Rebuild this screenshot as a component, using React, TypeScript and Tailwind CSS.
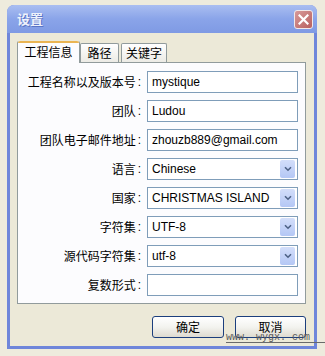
import type { ReactNode } from "react";

const cjk = "font-['Noto_Sans_CJK_SC','Noto_Sans',sans-serif]";
const latin = "font-['Liberation_Sans','Noto_Sans_CJK_SC',sans-serif]";

type Field = { label: string; value: string; select?: boolean };

const fields: Field[] = [
  { label: "工程名称以及版本号", value: "mystique" },
  { label: "团队", value: "Ludou" },
  { label: "团队电子邮件地址", value: "zhouzb889@gmail.com" },
  { label: "语言", value: "Chinese", select: true },
  { label: "国家", value: "CHRISTMAS ISLAND", select: true },
  { label: "字符集", value: "UTF-8", select: true },
  { label: "源代码字符集", value: "utf-8", select: true },
  { label: "复数形式", value: "" },
];

export default function App() {
  return (
    <div className="relative h-[356px] w-[325px] overflow-hidden bg-[#eeebdd] pl-[7px] pt-[5px]">
      <div className="flex h-[344px] w-[310px] flex-col rounded-t-[7px] bg-[#6f86da] px-[3px] pb-[3px]">
        <TitleBar />
        <div className="flex flex-1 flex-col bg-[#ece9d8] pl-[7px] pr-[8px] pt-[8px]">
          <Tabs />
          <div className="flex h-[242px] flex-col border border-[#919b9c] bg-[#fcfcfe] pb-[7px] pl-[2px] pr-[7px] pt-[8px]">
            <div className="grid grid-cols-[1fr_151px] gap-x-[6px] gap-y-[7px]">
              {fields.map((f) => (
                <FieldRow key={f.label} field={f} />
              ))}
            </div>
          </div>
          <div className="mt-[12px] flex justify-end gap-[11px]">
            <XpButton width="w-[72px]">确定</XpButton>
            <XpButton width="w-[71px]">取消</XpButton>
          </div>
        </div>
      </div>
      <Watermark />
    </div>
  );
}

function TitleBar() {
  return (
    <div className="-mx-[3px] flex h-[28px] items-center justify-between rounded-t-[7px] bg-gradient-to-b from-[#aabef1] via-[#8aa4e9] to-[#7f9ae4] pl-[10px] pr-[4px]">
      <span
        className={`${cjk} text-[13px] font-bold text-[#eef2fc] [text-shadow:1px_1px_0_#5a74c4]`}
      >
        设置
      </span>
      <div className="flex h-[19px] w-[19px] items-center justify-center rounded-[3px] border border-[#f1e9ea] bg-gradient-to-br from-[#d79a9a] to-[#b8605f]">
        <svg width="11" height="11" viewBox="0 0 11 11">
          <path
            d="M1.5 1.5 L9.5 9.5 M9.5 1.5 L1.5 9.5"
            stroke="#ffffff"
            strokeWidth="2.2"
            strokeLinecap="square"
          />
        </svg>
      </div>
    </div>
  );
}

function Tabs() {
  return (
    <div className="flex h-[21px] items-end">
      <div className="relative z-10 -mb-px flex h-[22px] w-[63px] flex-col rounded-t-[2px] border-x border-[#919b9c] bg-[#fcfcfe]">
        <div className="h-[3px] rounded-t-[2px] bg-[#eab553]" />
        <div className={`${cjk} flex flex-1 items-center justify-center pb-[2px] text-[12px] text-black`}>
          工程信息
        </div>
      </div>
      <InactiveTab width="w-[39px]">路径</InactiveTab>
      <div className="w-[2px]" />
      <InactiveTab width="w-[46px]">关键字</InactiveTab>
    </div>
  );
}

function InactiveTab({ width, children }: { width: string; children: ReactNode }) {
  return (
    <div
      className={`${width} ${cjk} flex h-[19px] items-center justify-center rounded-t-[2px] border border-b-0 border-[#919b9c] bg-gradient-to-b from-[#ffffff] to-[#ecebe5] text-[12px] text-black`}
    >
      {children}
    </div>
  );
}

function FieldRow({ field }: { field: Field }) {
  return (
    <>
      <div className={`${cjk} flex h-[22px] items-center justify-end text-[12px] text-black`}>
        {field.label}
        <span className={`${latin} ml-[2px]`}>:</span>
      </div>
      <div className="flex h-[22px] items-center border border-[#7f9db9] bg-white pl-[4px] pr-[2px]">
        <span className={`${latin} flex-1 truncate text-[12px] text-black`}>
          {field.value}
        </span>
        {field.select && <DropButton />}
      </div>
    </>
  );
}

function DropButton() {
  return (
    <div className="flex h-[18px] w-[15px] items-center justify-center rounded-[2px] bg-gradient-to-b from-[#d3defa] to-[#b4c7f5]">
      <svg width="8" height="6" viewBox="0 0 8 6">
        <path
          d="M1 1.2 L4 4.2 L7 1.2"
          fill="none"
          stroke="#4d6185"
          strokeWidth="1.6"
        />
      </svg>
    </div>
  );
}

function XpButton({ width, children }: { width: string; children: ReactNode }) {
  return (
    <div
      className={`${width} ${cjk} flex h-[22px] items-center justify-center rounded-[3px] border border-[#1c3f7d] bg-gradient-to-b from-[#ffffff] via-[#f3f3ef] to-[#dedbd0] pb-[1px] text-[12px] leading-[12px] text-black`}
    >
      {children}
    </div>
  );
}

function Watermark() {
  return (
    <div className="absolute left-[226px] top-[334px] flex w-[99px] flex-col">
      <span className="whitespace-nowrap font-['Liberation_Mono',monospace] text-[10px] leading-[8px] text-[#5a5a5a]">
        www. wygx. com
      </span>
      <div className="h-px bg-[#6a6a6a]" />
    </div>
  );
}
